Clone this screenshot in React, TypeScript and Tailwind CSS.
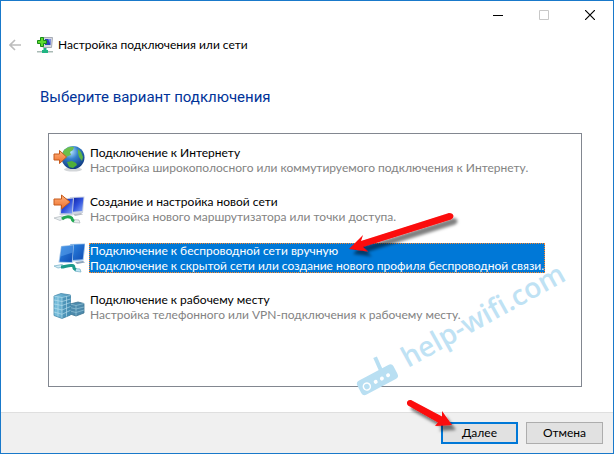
import React, { useState } from 'react';

type IconKind = 'internet' | 'router' | 'wireless' | 'workplace';

interface ConnectionOption {
    id: IconKind;
    title: string;
    description: string;
}

const options: ConnectionOption[] = [
    { id: 'internet', title: 'Подключение к Интернету', description: 'Настройка широкополосного или коммутируемого подключения к Интернету.' },
    { id: 'router', title: 'Создание и настройка новой сети', description: 'Настройка нового маршрутизатора или точки доступа.' },
    { id: 'wireless', title: 'Подключение к беспроводной сети вручную', description: 'Подключение к скрытой сети или создание нового профиля беспроводной связи.' },
    { id: 'workplace', title: 'Подключение к рабочему месту', description: 'Настройка телефонного или VPN-подключения к рабочему месту.' },
];

const OptionIcon: React.FC<{ kind: IconKind }> = ({ kind }) => (
    <svg viewBox="0 0 32 32" className="h-8 w-8 flex-shrink-0" aria-hidden="true">
        <defs>
            <radialGradient id="globe" cx=".4" cy=".25" r=".8">
                <stop offset="0" stopColor="#b8e4ff" />
                <stop offset=".4" stopColor="#3580cc" />
                <stop offset="1" stopColor="#0b3378" />
            </radialGradient>
            <linearGradient id="orange" x1="0" x2="0" y1="0" y2="1">
                <stop offset="0" stopColor="#ffb27c" />
                <stop offset="1" stopColor="#ee6f2b" />
            </linearGradient>
            <linearGradient id="navyScreen" x1="0" x2="1" y1="0" y2="1">
                <stop offset="0" stopColor="#0d1f9c" />
                <stop offset=".5" stopColor="#2f50dc" />
                <stop offset="1" stopColor="#86a8f5" />
            </linearGradient>
            <linearGradient id="blueScreen" x1="0" x2="1" y1="0" y2="1">
                <stop offset="0" stopColor="#2d86e2" />
                <stop offset="1" stopColor="#0f4cb4" />
            </linearGradient>
            <linearGradient id="tower" x1="0" x2="1">
                <stop offset="0" stopColor="#7cc3e0" />
                <stop offset="1" stopColor="#4d94b8" />
            </linearGradient>
        </defs>
        {kind === 'internet' && (
            <>
                <ellipse cx="20" cy="25.500" rx="9" ry="2" fill="#d3d6d9" />
                <circle cx="20" cy="13.500" r="11.500" fill="url(#globe)" />
                <path d="M11 6c3-3 7-4 10-3l-1 3-3 2 1 3-3 1-4 3-3-2z" fill="#6bbf4c" />
                <path d="M14 18l5-1 4 2 1 2-4 3-4-1z" fill="#4fae3a" />
                <path d="M25 5l3 3 2 5-1 4-3-4-1-4z" fill="#5cb446" />
                <path d="M1 10h5.500V6.500L13.500 13l-7 6.500V16H1z" fill="url(#orange)" stroke="#c65a1c" strokeLinejoin="round" />
            </>
        )}
        {kind === 'router' && (
            <>
                <path d="M17 4l14.500-.5-1.500 16.500-11 1z" fill="#cdd4e2" />
                <path d="M18.500 5l12-.5-1.300 13.500-9.700.7z" fill="url(#navyScreen)" />
                <path d="M8 5.500l13-1-1.300 18L6.500 22z" fill="#cdd4e2" />
                <path d="M9 6.500l11-1-1 15-11-.3z" fill="url(#navyScreen)" />
                <path d="M20 21l8-1 2 1.500-8 1.500z" fill="#b6bbc4" />
                <path d="M1 25l8-2 4 1.500-6 3z" fill="#e9eef0" stroke="#a5adb3" strokeWidth=".6" />
                <path d="M20 26.500l6 .500 1 3-6-.5z" fill="#e9eef0" stroke="#a5adb3" strokeWidth=".6" />
                <path d="M9 26c3-2.500 7-2.500 9-1.500s0 2.500 3 4" fill="none" stroke="#22a852" strokeWidth="3" />
                <path d="M1 6h7.500V2L17 9l-8.500 7v-4H1z" fill="url(#orange)" stroke="#c65a1c" strokeLinejoin="round" />
            </>
        )}
        {kind === 'wireless' && (
            <>
                <path d="M17 2l15.500-.5-2 17-11 1z" fill="#9fc4ea" />
                <path d="M18 2.700l13.500-.5-1.800 15-10 .8z" fill="url(#blueScreen)" />
                <path d="M8 4l13-1.500-1.500 18.500L5.500 20.500z" fill="#9fc4ea" />
                <path d="M8.700 4.800l11.500-1.300-1.400 16.500-12.200-.3z" fill="url(#blueScreen)" />
                <path d="M8.700 4.800l11.500-1.300-.6 7-12 4z" fill="#61a7ef" opacity=".5" />
                <path d="M22 20l8-1 2 1.500-8 1.500z" fill="#8da5bd" />
                <path d="M1 24l8-1.500 3 2-7 1.500z" fill="#d3ecf5" stroke="#80b6cb" strokeWidth=".8" />
                <path d="M21 26.500l6 .500 1 3-6-.8z" fill="#c3e8f5" stroke="#80b6cb" strokeWidth=".8" />
                <path d="M8 25c4 0 7-2 11-1.500s-.5 2.500 4 4" fill="none" stroke="#1b9a8a" strokeWidth="3" />
            </>
        )}
        {kind === 'workplace' && (
            <>
                <path d="M17 13l8-2 6 1.500v9.500l-8 3-6-2z" fill="#4d8aac" stroke="#3d7390" strokeWidth=".8" />
                <path d="M17 13l6 1.500 8-2M23 14.500v10M17 16.500l6 1.500 8-2M17 20l6 1.500 8-2.500" fill="none" stroke="#95c5d9" strokeWidth=".7" />
                <path d="M1 5l7-2.500 9.500 1.500v20L9 27.500l-8-3z" fill="url(#tower)" stroke="#4688aa" strokeWidth=".8" />
                <path d="M9 6.500l8.500-2V24L9 27.500z" fill="#3c83a9" opacity=".5" />
                <path d="M1 5l8 1.500 8.500-2M9 6.500v21M1 9l8 1.500L17.500 8M1 13l8 1.500 8.500-3M1 17l8 2 8.500-3.500M1 21l8 2.300 8.500-4M5 6v19.500M13.500 5.500v20" fill="none" stroke="#bfe4f1" strokeWidth=".6" />
            </>
        )}
    </svg>
);

const HeaderIcon = () => (
    <svg viewBox="0 0 16 16" className="h-4 w-4 flex-shrink-0" aria-hidden="true">
        <path d="M6 .500h9.500l-1 10H6z" fill="#d6dae2" stroke="#a6abb5" />
        <path d="M8 2h5.500v6H8z" fill="#2f42b8" />
        <path d="M11 2h2.500v5z" fill="#7b8fe8" />
        <path d="M0 14h16v1.500H0z" fill="#a9bab5" />
        <path d="M6.500 11h3v2h1.500v3H5v-3h1.500z" fill="#20b583" />
        <path d="M3.500.500h3v3h3v3h-3v3h-3v-3h-3v-3h3z" fill="#5edb2d" stroke="#178b18" />
    </svg>
);

const RowPointer = () => (
    <svg viewBox="0 0 120 56" className="pointer-events-none absolute -top-9 left-64 h-14 w-[120px]" aria-hidden="true">
        <defs>
            <filter id="rowShadow" x="-20%" y="-30%" width="140%" height="180%">
                <feDropShadow dx="4" dy="5" stdDeviation="1.500" floodColor="#000" floodOpacity=".5" />
            </filter>
        </defs>
        <path filter="url(#rowShadow)" d="M4 42L18 28L16 34L104 6Q108 6 108.500 9Q108.500 11.500 106 12.500L18 40L23 44.500z" fill="#fb0808" />
    </svg>
);

const ButtonPointer = () => (
    <svg viewBox="0 0 60 44" className="pointer-events-none absolute -top-8 -left-11 h-11 w-[60px]" aria-hidden="true">
        <defs>
            <filter id="buttonShadow" x="-20%" y="-30%" width="150%" height="180%">
                <feDropShadow dx="4" dy="5" stdDeviation="1.500" floodColor="#000" floodOpacity=".5" />
            </filter>
        </defs>
        <path filter="url(#buttonShadow)" d="M53 33L43 19L43 24.500L12 8Q9 7.500 8 10Q7.500 12 9 13.500L39 30.500L36 34z" fill="#fb0808" />
    </svg>
);

const Watermark = () => (
    <svg viewBox="0 0 220 140" className="pointer-events-none absolute right-[33px] bottom-[54px] h-[140px] w-[220px] overflow-visible" aria-hidden="true">
        <g transform="translate(48 109) rotate(-29)" fill="#bfe2f4">
            <text x="0" y="0" fontFamily="Open Sans, Noto Sans, sans-serif" fontWeight="600" fontSize="28">help-wifi.com</text>
        </g>
        <g transform="translate(17 121) rotate(-28)">
            <rect x="-20" y="-8" width="41" height="16" rx="4" fill="#b9dff2" />
            <path d="M8 -7L9 -21" stroke="#b9dff2" strokeWidth="4" />
            <circle cx="-12" cy="1" r="3.500" fill="none" stroke="#fff" strokeWidth="1.500" />
            <circle cx="-2" cy="1" r="2" fill="#fff" />
            <circle cx="5" cy="1" r="2" fill="#fff" />
            <circle cx="12" cy="1" r="2" fill="#fff" />
        </g>
    </svg>
);

export default function App() {
    const [selectedId, setSelectedId] = useState<IconKind>('wireless');

    return (
        <div className="relative flex min-h-screen flex-col border border-[#1979ca] bg-white font-['Lato','Noto_Sans',sans-serif] text-xs text-black">
            {/* WINDOW BUTTONS */}
            <div className="flex h-7 justify-end">
                <button aria-label="Свернуть" className="flex w-[46px] items-center justify-center">
                    <svg viewBox="0 0 10 10" className="h-2.5 w-2.5"><path d="M0 5.500h10" stroke="#000" /></svg>
                </button>
                <button aria-label="Развернуть" disabled className="flex w-[46px] items-center justify-center">
                    <svg viewBox="0 0 10 10" className="h-2.5 w-2.5"><path d="M.5.5h9v9h-9z" fill="none" stroke="#c8c8c8" /></svg>
                </button>
                <button aria-label="Закрыть" className="flex w-[46px] items-center justify-center">
                    <svg viewBox="0 0 10 10" className="h-2.5 w-2.5"><path d="M0 0l10 10M10 0L0 10" stroke="#000" strokeWidth="1.200" /></svg>
                </button>
            </div>

            {/* HEADER */}
            <header className="flex h-8 items-center px-2">
                <button aria-label="Назад" disabled className="mr-4">
                    <svg viewBox="0 0 12 12" className="h-3 w-3"><path d="M12 6H1M6 1L1 6l5 5" fill="none" stroke="#bcbcbc" strokeWidth="1.600" /></svg>
                </button>
                <HeaderIcon />
                <h1 className="ml-1 pl-px">Настройка подключения или сети</h1>
            </header>

            <main className="flex flex-1 flex-col pr-[31px] pb-[25px] pl-[47px]">
                <h2 className="-ml-2 py-6 font-['Roboto','Noto_Sans',sans-serif] text-[15px] leading-6 text-[#003399]">Выберите вариант подключения</h2>

                {/* CONNECTION OPTIONS */}
                <div role="listbox" aria-label="Выберите вариант подключения" className="flex flex-1 flex-col gap-[17px] border border-[#828790] px-1 pt-2.5">
                    {options.map(option => {
                        const selected = option.id === selectedId;
                        return (
                            <button
                                key={option.id}
                                role="option"
                                aria-selected={selected}
                                onClick={() => setSelectedId(option.id)}
                                className="flex items-center gap-1 text-left"
                            >
                                <OptionIcon kind={option.id} />
                                <span className={`relative flex flex-col px-px leading-[15px] whitespace-nowrap ${selected ? 'bg-[#0078d7] text-white outline-1 -outline-offset-1 outline-dotted outline-[#ff8728]' : ''}`}>
                                    <span>{option.title}</span>
                                    <span className={selected ? 'text-white' : 'text-[#838383]'}>{option.description}</span>
                                    {option.id === 'wireless' && <RowPointer />}
                                </span>
                            </button>
                        );
                    })}
                </div>
            </main>

            <Watermark />

            {/* FOOTER */}
            <footer className="flex justify-end gap-2 border-t border-[#dfdfdf] bg-[#f0f0f0] px-2.5 py-[9px]">
                <button className="relative h-[22px] w-[77px] border-2 border-[#0078d7] bg-[#e1e1e1] leading-4">
                    Далее
                    <ButtonPointer />
                </button>
                <button className="h-[22px] w-[77px] border border-[#adadad] bg-[#e1e1e1] leading-4">Отмена</button>
            </footer>
        </div>
    );
}
